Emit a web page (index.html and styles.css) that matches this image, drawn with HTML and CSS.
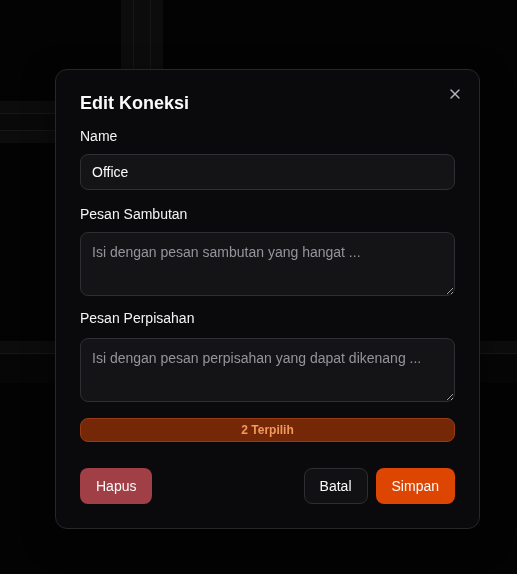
FILE: index.html
```html
<!DOCTYPE html>
<html lang="id">
<head>
<meta charset="utf-8">
<title>Edit Koneksi</title>
<link rel="stylesheet" href="styles.css">
</head>
<body>
<div class="canvas">
  <div class="band band-v"></div>
  <div class="band band-h1"></div>
  <div class="band band-h2"></div>
</div>

<div class="dialog" role="dialog" aria-labelledby="dlg-title">
  <button class="close" type="button" aria-label="Tutup">
    <svg width="16" height="16" viewBox="0 0 24 24" fill="none" stroke="currentColor" stroke-width="2" stroke-linecap="round" stroke-linejoin="round"><path d="M18 6 6 18"/><path d="m6 6 12 12"/></svg>
  </button>
  <h2 class="title" id="dlg-title">Edit Koneksi</h2>

  <label class="label label-first" for="name">Name</label>
  <input class="field input" id="name" type="text" value="Office">

  <label class="label label-second" for="welcome">Pesan Sambutan</label>
  <textarea class="field textarea ta-first" id="welcome" placeholder="Isi dengan pesan sambutan yang hangat ..."></textarea>

  <label class="label label-third" for="bye">Pesan Perpisahan</label>
  <textarea class="field textarea ta-second" id="bye" placeholder="Isi dengan pesan perpisahan yang dapat dikenang ..."></textarea>

  <div class="badge">2 Terpilih</div>

  <div class="actions">
    <button class="btn btn-danger" type="button">Hapus</button>
    <div class="actions-right">
      <button class="btn btn-outline" type="button">Batal</button>
      <button class="btn btn-primary" type="button">Simpan</button>
    </div>
  </div>
</div>
</body>
</html>
```
FILE: styles.css
```css
* { box-sizing: border-box; }

html, body {
  margin: 0;
  padding: 0;
  width: 100%;
  height: 100%;
  background: #030303;
  overflow: hidden;
  font-family: "Liberation Sans", Arial, sans-serif;
  color: #f4f4f5;
}

.canvas {
  position: relative;
  width: 100%;
  height: 100%;
}

.band {
  position: absolute;
}

.band-v {
  left: 121px;
  top: 0;
  width: 42px;
  height: 320px;
  background:
    linear-gradient(to right,
      #0c0c0c 0, #0c0c0c 12px,
      #171717 12px, #171717 13px,
      #0c0c0c 13px, #0c0c0c 29px,
      #171717 29px, #171717 30px,
      #0c0c0c 30px);
}

.band-h1 {
  left: 0;
  top: 101px;
  width: 200px;
  height: 42px;
  background:
    linear-gradient(to bottom,
      #0c0c0c 0, #0c0c0c 12px,
      #171717 12px, #171717 13px,
      #090909 13px, #090909 29px,
      #171717 29px, #171717 30px,
      #0c0c0c 30px);
}

.band-h2 {
  left: 0;
  top: 341px;
  width: 100%;
  height: 42px;
  background:
    linear-gradient(to bottom,
      #0c0c0c 0, #0c0c0c 12px,
      #171717 12px, #171717 13px,
      #060606 13px);
}

.dialog {
  position: fixed;
  left: 55px;
  top: 69px;
  width: 425px;
  height: 460px;
  padding: 23px 24px 24px 24px;
  background: #0a0a0c;
  border: 1px solid #27272a;
  border-radius: 12px;
  display: flex;
  flex-direction: column;
  box-shadow: 0 10px 30px rgba(0, 0, 0, 0.5);
}

.close {
  position: absolute;
  right: 16px;
  top: 16px;
  width: 16px;
  height: 16px;
  padding: 0;
  border: 0;
  background: transparent;
  color: #b4b4bb;
  display: flex;
  align-items: center;
  justify-content: center;
  cursor: pointer;
}

.title {
  margin: 0;
  font-size: 18px;
  line-height: 20px;
  font-weight: 700;
  color: #fafafa;
}

.label {
  display: block;
  font-size: 14px;
  line-height: 20px;
  font-weight: 500;
  color: #f4f4f5;
}

.label-first { margin-top: 13px; }
.label-second { margin-top: 14px; }
.label-third { margin-top: 12px; }

.field {
  display: block;
  width: 100%;
  margin: 8px 0 0 0;
  background: #141416;
  border: 1px solid #2e2e33;
  border-radius: 8px;
  color: #fafafa;
  font-family: "Liberation Sans", Arial, sans-serif;
  font-size: 14px;
  line-height: 20px;
  outline: none;
  color-scheme: dark;
}

.field::placeholder {
  color: #94949b;
  opacity: 1;
}

.input {
  height: 36px;
  padding: 0 11px;
}

.textarea {
  height: 64px;
  padding: 9px 11px;
  resize: vertical;
}

.ta-second { margin-top: 10px; }

.badge {
  margin-top: 16px;
  height: 24px;
  border: 1px solid #9a3a14;
  border-radius: 8px;
  background: #742808;
  color: #f29a5c;
  font-size: 12px;
  font-weight: 700;
  line-height: 22px;
  text-align: center;
}

.actions {
  margin-top: 26px;
  display: flex;
  justify-content: space-between;
  align-items: center;
}

.actions-right {
  display: flex;
  gap: 8px;
}

.btn {
  height: 36px;
  padding: 0 16px;
  border-radius: 8px;
  font-family: "Liberation Sans", Arial, sans-serif;
  font-size: 14px;
  font-weight: 500;
  color: #fafafa;
  border: 0;
  cursor: pointer;
}

.btn-danger {
  background: #a03f45;
}

.btn-outline {
  background: #111113;
  border: 1px solid #2e2e32;
  padding: 0 15px;
}

.btn-primary {
  background: #dc4502;
}
```
